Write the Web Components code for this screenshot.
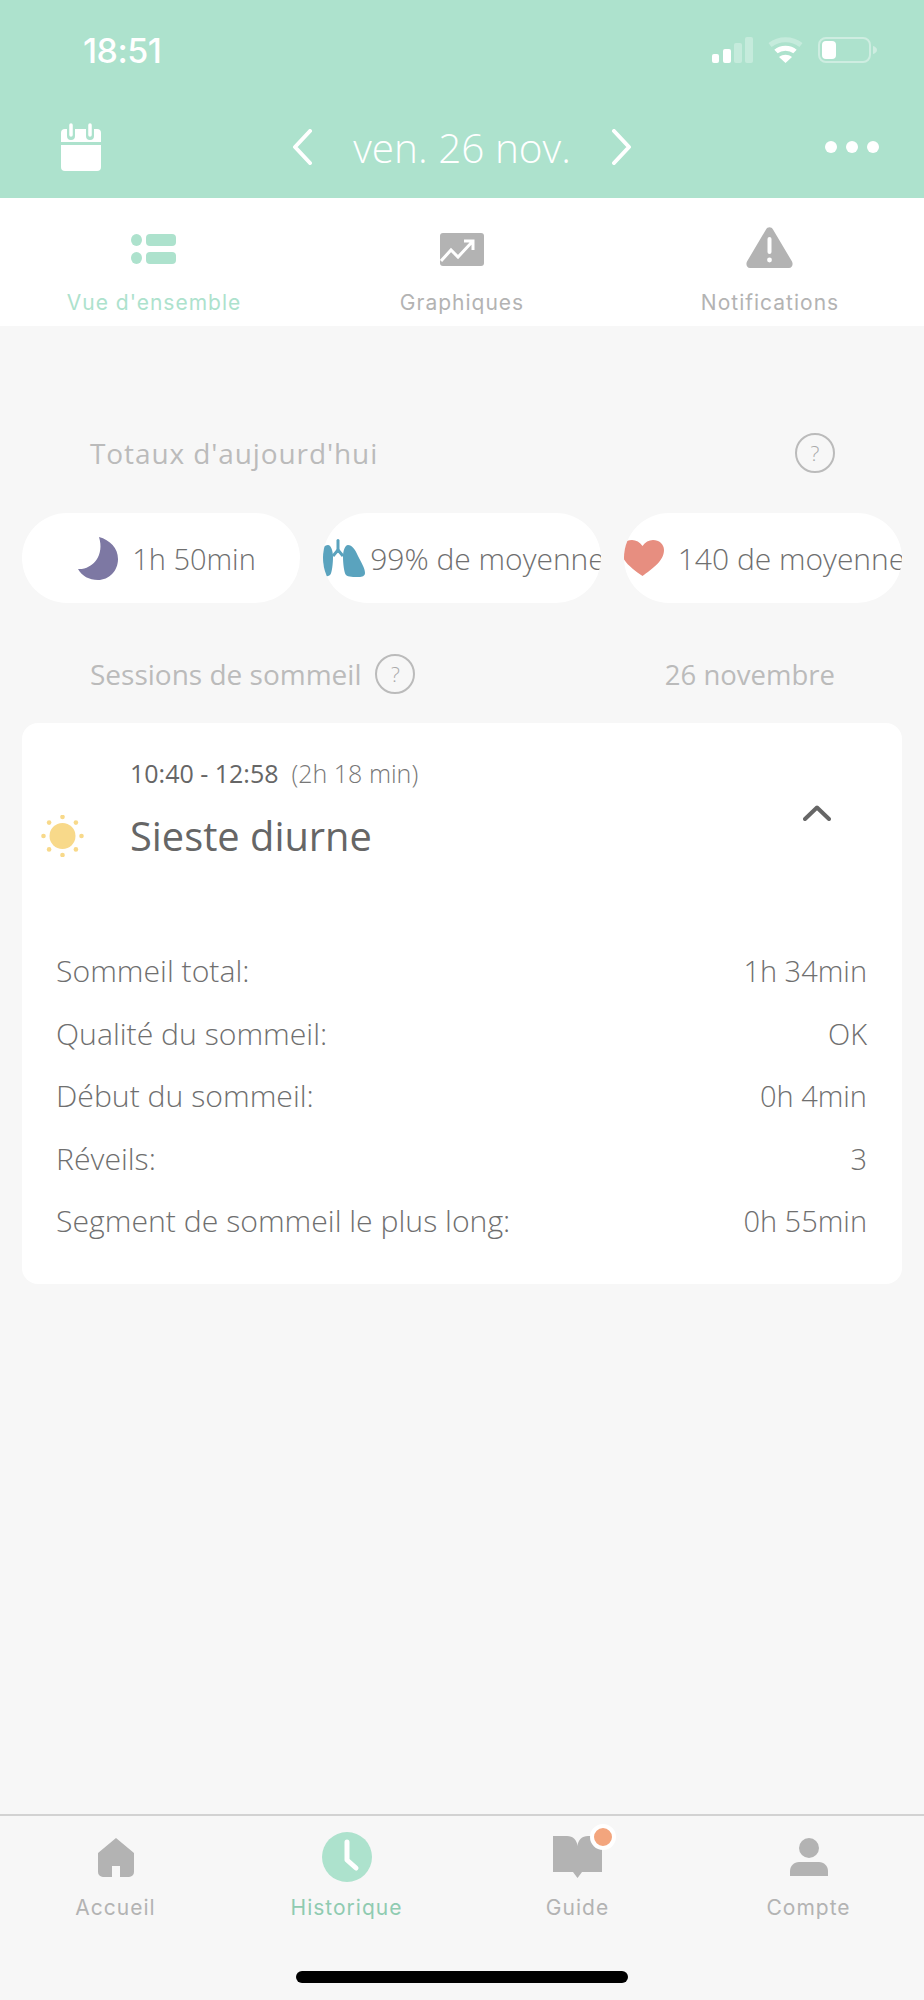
<!DOCTYPE html>
<html lang="fr">
<head>
<meta charset="utf-8">
<title>Historique</title>
<style>
html, body { margin: 0; padding: 0; background: #f7f7f7; }
svg { display: block; }
</style>
</head>
<body>
<app-screen>
  <status-bar slot="top"></status-bar>
  <date-nav slot="top" label="ven. 26 nov."></date-nav>
  <top-tabs slot="top"></top-tabs>

  <section-head style="margin-top:107px; --track:.9px" title-text="Totaux d'aujourd'hui" help="end"></section-head>

  <pill-row>
    <stat-pill gap="14" shift="-6" style="font-size:29px">
      <svg slot="icon" width="40" height="43" viewBox="0 0 40 43"><path fill="#7d78a3" d="M21 0C32 3 40 11 40 22 40 34 31 43 20 43 11 43 4 39 0 32 14 33 27 19 21 0Z"/></svg>
      1h 50min
    </stat-pill>
    <stat-pill gap="6">
      <!-- left lung runs past the pill edge and gets clipped, same as the app -->
      <svg slot="icon" width="45" height="39" viewBox="0 0 45 39" style="overflow:visible">
        <g fill="#5aa3be" transform="translate(2 0)">
          <rect x="15.500" width="3" height="14" rx="1.500"/>
          <path d="M17 11L12 17M17 11L22 17" fill="none" stroke="#5aa3be" stroke-width="3"/>
          <path d="M22 18C22 12 24 6 27 6 31 6 34 10 37 17 40 23 44 29 44 34 44 37 41 38 38 38 33 38 27 38 25 36 23 34 22 24 22 18Z"/>
          <path d="M12 18C12 12 10 6 7 6 3 6 0 10-3 17-6 23-10 29-10 34-10 37-7 38-4 38 1 38 7 38 9 36 11 34 12 24 12 18Z"/>
        </g>
      </svg>
      99% de moyenne
    </stat-pill>
    <stat-pill gap="14">
      <svg slot="icon" width="43" height="36" viewBox="0 0 43 36"><path fill="#e78e80" d="M21.500 36C12 29 0 21 0 10 0 4 5 0 11 0c4 0 8 2 10.500 6C24 2 28 0 32 0c6 0 11 4 11 10 0 11-12 19-21.500 26Z"/></svg>
      140 de moyenne
    </stat-pill>
  </pill-row>

  <section-head style="margin-top:51px" title-text="Sessions de sommeil" help="inline" aside="26 novembre"></section-head>

  <sleep-card style="margin-top:29px" span="10:40 - 12:58" length="(2h 18 min)" name="Sieste diurne">
    <detail-row value="1h 34min">Sommeil total:</detail-row>
    <detail-row value="OK">Qualité du sommeil:</detail-row>
    <detail-row value="0h 4min">Début du sommeil:</detail-row>
    <detail-row value="3">Réveils:</detail-row>
    <detail-row value="0h 55min">Segment de sommeil le plus long:</detail-row>
  </sleep-card>

  <bottom-nav slot="bottom"></bottom-nav>
</app-screen>

<script>
const BODY_FONT = `"Open Sans", Lato, sans-serif`;
const UI_FONT = `Inter, Roboto, sans-serif`;

class AppScreen extends HTMLElement {
    constructor() {
        super();
        this.attachShadow({ mode: "open" }).innerHTML = `
            <style>
                :host { display: flex; flex-direction: column; width: 924px; height: 2000px; background: #f7f7f7; overflow: hidden; }
                main { flex: 1; display: flex; flex-direction: column; padding: 0 22px; }
            </style>
            <slot name="top"></slot>
            <main><slot></slot></main>
            <slot name="bottom"></slot>`;
    }
}

class StatusBar extends HTMLElement {
    constructor() {
        super();
        this.attachShadow({ mode: "open" }).innerHTML = `
            <style>
                :host { display: flex; align-items: center; justify-content: space-between; height: 96px; padding: 4px 47px 0 83px; box-sizing: border-box; background: #ade2cd; color: #fff; }
                .time { font: 500 34px ${UI_FONT}; letter-spacing: -0.5px; }
                .icons { display: flex; align-items: center; gap: 15px; }
            </style>
            <span class="time">18:51</span>
            <div class="icons">
                <svg width="41" height="26" viewBox="0 0 41 26" fill="#fff">
                    <rect x="0" y="17" width="7" height="9" rx="2"/>
                    <rect x="11" y="12" width="8" height="14" rx="2"/>
                    <rect x="22" y="6" width="8" height="20" rx="2" opacity=".3"/>
                    <rect x="33" y="0" width="8" height="26" rx="2" opacity=".3"/>
                </svg>
                <svg width="35" height="26" viewBox="0 0 35 26" fill="none" stroke="#fff">
                    <path d="M2 8C11 1 24 1 33 8" stroke-width="5" opacity=".3"/>
                    <path d="M8 14.500C13 10 22 10 27 14.500" stroke-width="5"/>
                    <path d="M17.500 26L11 20C15 17 20 17 24 20Z" fill="#fff" stroke="none"/>
                </svg>
                <svg width="59" height="26" viewBox="0 0 59 26" fill="#fff">
                    <rect x="1" y="1" width="51" height="24" rx="7" fill="none" stroke="#fff" stroke-width="2" opacity=".4"/>
                    <rect x="4" y="4" width="14" height="18" rx="4"/>
                    <path d="M55 9c2 .5 4 2 4 4s-2 3.500-4 4z" opacity=".4"/>
                </svg>
            </div>`;
    }
}

class DateNav extends HTMLElement {
    constructor() {
        super();
        const chevron = (d) => `<svg width="21" height="36" viewBox="0 0 21 36" fill="none" stroke="#fff" stroke-width="4" stroke-linecap="round" stroke-linejoin="round"><path d="${d}"/></svg>`;
        this.attachShadow({ mode: "open" }).innerHTML = `
            <style>
                :host { display: grid; grid-template-columns: 1fr auto 1fr; align-items: center; height: 102px; padding: 0 45px; background: #ade2cd; color: #fff; }
                .cal { margin-left: 16px; }
                .mid { display: flex; align-items: center; gap: 41px; }
                .label { font: 300 40.500px ${BODY_FONT}; width: 216px; white-space: nowrap; display: flex; justify-content: center; }
                .dots { justify-self: end; display: flex; gap: 9px; }
                .dots i { width: 12px; height: 12px; border-radius: 50%; background: #fff; }
            </style>
            <svg class="cal" width="40" height="48" viewBox="0 0 40 48">
                <path fill="#fff" d="M4 6h32a4 4 0 0 1 4 4v9H0v-9a4 4 0 0 1 4-4Z"/>
                <path fill="#fff" d="M0 22h40v22a4 4 0 0 1-4 4H4a4 4 0 0 1-4-4Z"/>
                <path d="M10 3v10M29 3v10" stroke="#ade2cd" stroke-width="8" stroke-linecap="round"/>
                <path d="M10 2v10M29 2v10" stroke="#fff" stroke-width="3.500" stroke-linecap="round"/>
            </svg>
            <div class="mid">
                ${chevron("M18 2L3 18l15 16")}
                <span class="label"></span>
                ${chevron("M3 2l15 16L3 34")}
            </div>
            <div class="dots"><i></i><i></i><i></i></div>`;
        this.shadowRoot.querySelector(".label").textContent = this.getAttribute("label");
    }
}

class TopTabs extends HTMLElement {
    constructor() {
        super();
        const tab = (cls, text, icon) => `<div class="tab ${cls}"><div class="ico">${icon}</div><span>${text}</span></div>`;
        this.attachShadow({ mode: "open" }).innerHTML = `
            <style>
                :host { display: grid; grid-template-columns: repeat(3, 1fr); height: 128px; padding-top: 30px; box-sizing: border-box; background: #fff; }
                .tab { display: flex; flex-direction: column; align-items: center; }
                .ico { height: 42px; display: flex; align-items: center; justify-content: center; }
                span { margin-top: 20px; font: 425 21px/26px ${UI_FONT}; letter-spacing: 1px; color: #b3b3b3; white-space: nowrap; }
                .on span { color: #ade2cd; }
            </style>
            ${tab("on", "Vue d'ensemble", `<svg width="45" height="30" viewBox="0 0 45 30" fill="#ade2cd" style="margin-right:2px"><ellipse cx="5.500" cy="6" rx="5.500" ry="6"/><ellipse cx="5.500" cy="24" rx="5.500" ry="6"/><rect x="15" width="30" height="12" rx="4"/><rect x="15" y="18" width="30" height="12" rx="4"/></svg>`)}
            ${tab("", "Graphiques", `<svg width="44" height="33" viewBox="0 0 44 33"><rect width="44" height="33" rx="3" fill="#b3b3b3"/><path d="M1 28l10-11 7 7 14-15M24 8h9v9" fill="none" stroke="#fff" stroke-width="3"/></svg>`)}
            ${tab("", "Notifications", `<svg width="47" height="41" viewBox="0 0 47 41" style="margin:-3px 2px 0 0"><path fill="#b3b3b3" d="M20 2.500c1.500-3 5.500-3 7 0l19 32c1.500 3 0 6.500-3 6.500H4c-3 0-4.500-3.500-3-6.500Z"/><path d="M23.500 12v13" stroke="#fff" stroke-width="4" stroke-linecap="round"/><circle cx="23.500" cy="33" r="2.400" fill="#fff"/></svg>`)}`;
    }
}

class HelpMark extends HTMLElement {
    constructor() {
        super();
        this.attachShadow({ mode: "open" }).innerHTML = `
            <style>
                :host { display: flex; align-items: center; justify-content: center; width: 40px; height: 40px; box-sizing: border-box; border: 2px solid #bbb; border-radius: 50%; color: #aaa; font: 300 21px ${BODY_FONT}; letter-spacing: 0; }
            </style>?`;
    }
}

class SectionHead extends HTMLElement {
    constructor() {
        super();
        const help = this.getAttribute("help");
        const aside = this.getAttribute("aside");
        this.attachShadow({ mode: "open" }).innerHTML = `
            <style>
                :host { display: flex; align-items: center; height: 40px; padding: 0 67px 0 68px; font: 400 28px ${BODY_FONT}; color: #bbb; }
                .t { white-space: nowrap; letter-spacing: var(--track, 0); }
                help-mark { margin-left: 14px; }
                .end { margin-left: auto; }
                .aside { margin-left: auto; white-space: nowrap; font-size: 27.500px; }
            </style>
            <span class="t"></span>
            <help-mark class="${help === "end" ? "end" : ""}"></help-mark>
            ${aside ? `<span class="aside"></span>` : ""}`;
        this.shadowRoot.querySelector(".t").textContent = this.getAttribute("title-text");
        if (aside) this.shadowRoot.querySelector(".aside").textContent = aside;
    }
}

class PillRow extends HTMLElement {
    constructor() {
        super();
        this.attachShadow({ mode: "open" }).innerHTML = `
            <style>
                :host { display: grid; grid-template-columns: repeat(3, 278px); justify-content: space-between; margin-top: 40px; }
            </style>
            <slot></slot>`;
    }
}

class StatPill extends HTMLElement {
    constructor() {
        super();
        const gap = this.getAttribute("gap") || 10;
        const shift = this.getAttribute("shift") || 0;
        this.attachShadow({ mode: "open" }).innerHTML = `
            <style>
                :host { display: flex; align-items: center; justify-content: center; height: 90px; border-radius: 45px; background: #fff; overflow: hidden; font: 300 30px ${BODY_FONT}; color: #6f6f6f; white-space: nowrap; }
                .in { display: flex; align-items: center; gap: ${gap}px; flex: none; transform: translateX(${-shift}px); }
            </style>
            <div class="in"><slot name="icon"></slot><span><slot></slot></span></div>`;
    }
}

class SleepCard extends HTMLElement {
    constructor() {
        super();
        const dots = [0, 45, 90, 135, 180, 225, 270, 315].map((a) => {
            const r = a * Math.PI / 180;
            return `<circle cx="${(21.5 + 19 * Math.cos(r)).toFixed(1)}" cy="${(21 + 19 * Math.sin(r)).toFixed(1)}" r="2.300"/>`;
        }).join("");
        this.attachShadow({ mode: "open" }).innerHTML = `
            <style>
                :host { display: block; padding: 32.500px 35px 32px 34px; border-radius: 16px; background: #fff; color: #666; }
                .head { display: grid; grid-template-columns: 43px 1fr 28px; column-gap: 46px; align-items: center; margin: 0 36px 0 -15px; }
                .when { grid-column: 2 / 4; font: 400 25px/34px ${BODY_FONT}; white-space: nowrap; }
                .len { margin-left: 13px; font-weight: 300; color: #777; }
                .name { margin-top: 18px; font: 400 39.800px/56px ${BODY_FONT}; }
                .sun { margin-top: 18px; }
                .up { align-self: start; margin-top: 15px; }
                .rows { margin-top: 76px; }
            </style>
            <div class="head">
                <div class="when"><span class="span"></span><span class="len"></span></div>
                <svg class="sun" width="43" height="42" viewBox="0 0 43 42" fill="#f8d98a"><circle cx="21.500" cy="21" r="13"/>${dots}</svg>
                <div class="name"></div>
                <svg class="up" width="28" height="16" viewBox="0 0 28 16" fill="none" stroke="#666" stroke-width="4" stroke-linecap="round" stroke-linejoin="round"><path d="M2 14L14 2.500 26 14"/></svg>
            </div>
            <div class="rows"><slot></slot></div>`;
        const root = this.shadowRoot;
        root.querySelector(".span").textContent = this.getAttribute("span");
        root.querySelector(".len").textContent = this.getAttribute("length");
        root.querySelector(".name").textContent = this.getAttribute("name");
    }
}

class DetailRow extends HTMLElement {
    constructor() {
        super();
        this.attachShadow({ mode: "open" }).innerHTML = `
            <style>
                :host { display: flex; align-items: center; justify-content: space-between; height: 62.500px; font: 300 30.200px ${BODY_FONT}; color: #6f6f6f; white-space: nowrap; }
                .v { font-size: 29px; }
            </style>
            <span><slot></slot></span><span class="v"></span>`;
        this.shadowRoot.querySelector(".v").textContent = this.getAttribute("value");
    }
}

class BottomNav extends HTMLElement {
    constructor() {
        super();
        const item = (cls, text, icon) => `<div class="item ${cls}"><div class="ico">${icon}</div><span>${text}</span></div>`;
        this.attachShadow({ mode: "open" }).innerHTML = `
            <style>
                :host { display: flex; flex-direction: column; height: 186px; box-sizing: border-box; border-top: 2px solid #d2d2d2; background: #f7f7f7; }
                .items { display: grid; grid-template-columns: repeat(4, 1fr); padding-top: 14px; }
                .item { display: flex; flex-direction: column; align-items: center; }
                .ico { position: relative; height: 54px; display: flex; align-items: center; justify-content: center; }
                span { margin-top: 10px; font: 425 21px/28px ${UI_FONT}; letter-spacing: 1px; color: #b3b3b3; }
                .on span { color: #8fcbb1; }
                .badge { position: absolute; left: 37px; top: -6px; width: 18px; height: 18px; border: 4px solid #fff; border-radius: 50%; background: #f3a57d; }
                .home-bar { width: 332px; height: 12px; margin: auto auto 17px; border-radius: 6px; background: #000; }
            </style>
            <div class="items">
                ${item("", "Accueil", `<svg width="36" height="39" viewBox="0 0 36 39" fill="#b3b3b3"><path d="M18 0L36 15V34a5 5 0 0 1-5 5H22V28H14V39H5a5 5 0 0 1-5-5V15Z"/></svg>`)}
                ${item("on", "Historique", `<svg width="50" height="50" viewBox="0 0 50 50"><circle cx="25" cy="25" r="25" fill="#ade2cd"/><path d="M25 10v18l9 8" fill="none" stroke="#fff" stroke-width="5" stroke-linecap="round" stroke-linejoin="round"/></svg>`)}
                ${item("", "Guide", `<svg width="49" height="42" viewBox="0 0 49 42" fill="#b3b3b3"><path d="M0 0H14C20 0 24 4 24.500 10 25 4 29 0 35 0H49V36H29L24.500 42 20 36H0Z"/></svg><i class="badge"></i>`)}
                ${item("", "Compte", `<svg width="38" height="38" viewBox="0 0 38 38" fill="#b3b3b3"><circle cx="19" cy="10" r="10"/><path d="M0 38V33C0 28 4 24 9 24H29C34 24 38 28 38 33V38Z"/></svg>`)}
            </div>
            <div class="home-bar"></div>`;
    }
}

customElements.define("help-mark", HelpMark);
customElements.define("status-bar", StatusBar);
customElements.define("date-nav", DateNav);
customElements.define("top-tabs", TopTabs);
customElements.define("section-head", SectionHead);
customElements.define("pill-row", PillRow);
customElements.define("stat-pill", StatPill);
customElements.define("detail-row", DetailRow);
customElements.define("sleep-card", SleepCard);
customElements.define("bottom-nav", BottomNav);
customElements.define("app-screen", AppScreen);
</script>
</body>
</html>
